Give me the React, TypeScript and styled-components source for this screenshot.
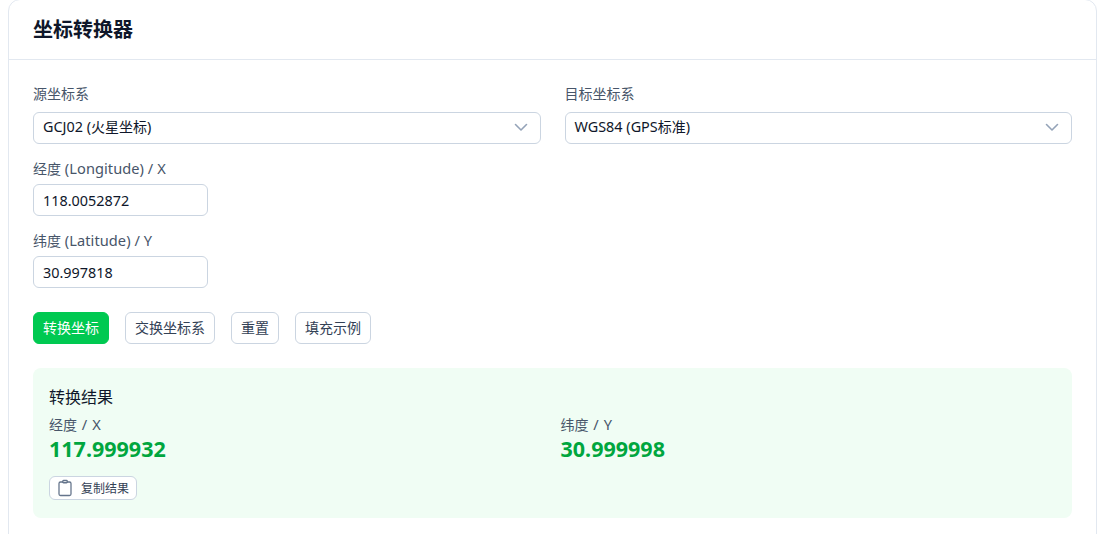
import React from "react";
import styled, { createGlobalStyle } from "styled-components";

const Global = createGlobalStyle`
  html, body { margin: 0; padding: 0; background: #fff; overflow: hidden; height: 534px; }
  body { font-family: "Noto Sans", "Noto Sans CJK SC", sans-serif; color: #0f172a; }
  * { box-sizing: border-box; }
`;

const Page = styled.div`
  padding: 0 2px 0 8px;
`;
const Card = styled.section`
  border: 1px solid #e2e8f0;
  border-radius: 12px;
  background: #fff;
  height: 560px;
  margin-top: -1px;
`;
const Header = styled.header`
  height: 60px;
  border-bottom: 1px solid #e2e8f0;
  padding: 0 24px;
  display: flex;
  align-items: center;
`;
const Title = styled.h1`
  margin: 0;
  font-size: 20px;
  line-height: 28px;
  font-weight: 700;
  color: #0f172a;
`;
const Body = styled.div`
  padding: 24px 24px 0;
  display: flex;
  flex-direction: column;
  gap: 16px;
`;
const Row = styled.div`
  display: grid;
  grid-template-columns: 1fr 1fr;
  gap: 24px;
`;
const Field = styled.div`
  display: flex;
  flex-direction: column;
  gap: 8px;
`;
const Label = styled.label<{ $tall?: boolean }>`
  font-size: 14px;
  line-height: ${(p) => (p.$tall ? "20px" : "16px")};
  height: ${(p) => (p.$tall ? "20px" : "16px")};
  color: #475569;
`;
const Latin = styled.span`
  font-size: 14.4px;
`;
const LabelLatin = styled.span`
  font-size: 14.6px;
  letter-spacing: 0.06px;
`;
const SelectBox = styled.div`
  height: 32px;
  border: 1px solid #cbd5e1;
  border-radius: 6px;
  display: flex;
  align-items: center;
  justify-content: space-between;
  padding: 0 11px 2px 9px;
  font-size: 14px;
  color: #0f172a;
`;
const SelectText = styled.span`
  line-height: 18px;
  height: 18px;
  margin-top: -1px;
`;
const Chevron = () => (
  <svg width="16" height="16" viewBox="0 0 16 16" fill="none" stroke="#94a3b8" strokeWidth="1.6" strokeLinecap="round" strokeLinejoin="round">
    <path d="M2.5 5.5 8 11 13.5 5.5" />
  </svg>
);
const Input = styled.input`
  width: 175px;
  height: 32px;
  border: 1px solid #cbd5e1;
  border-radius: 6px;
  padding: 0 9px;
  font: inherit;
  font-size: 14.4px;
  color: #0f172a;
  outline: none;
`;
const Buttons = styled.div`
  display: flex;
  gap: 16px;
  margin-top: 8px;
`;
const Btn = styled.button<{ $primary?: boolean }>`
  height: 32px;
  padding: 0 9px 2px;
  border-radius: 6px;
  font: inherit;
  font-size: 14px;
  border: 1px solid ${(p) => (p.$primary ? "#00c951" : "#cbd5e1")};
  background: ${(p) => (p.$primary ? "#00c951" : "#fff")};
  color: ${(p) => (p.$primary ? "#fff" : "#334155")};
`;
const Result = styled.div`
  margin-top: 8px;
  height: 150px;
  background: #f0fdf4;
  border-radius: 8px;
  padding: 16px;
`;
const ResultTitle = styled.h2`
  margin: 0 0 5px;
  font-size: 16px;
  line-height: 26px;
  font-weight: 400;
  color: #0f172a;
`;
const Cols = styled.div`
  display: grid;
  grid-template-columns: 1fr 1fr;
  gap: 16px;
`;
const ValLabel = styled.div`
  font-size: 14px;
  line-height: 18px;
  height: 20px;
  word-spacing: 1px;
  color: #475569;
`;
const Value = styled.div`
  font-size: 21.5px;
  line-height: 28px;
  height: 28px;
  font-weight: 700;
  color: #00a63e;
`;
const CopyBtn = styled.button`
  margin-top: 13px;
  height: 24px;
  width: 88px;
  padding: 0 0 0 6px;
  display: flex;
  align-items: center;
  gap: 7px;
  background: #fff;
  border: 1px solid #cbd5e1;
  border-radius: 6px;
  font: inherit;
  font-size: 12px;
  color: #334155;
`;
const Clipboard = () => (
  <svg width="18" height="18" viewBox="0 0 24 24" fill="none" stroke="#64748b" strokeWidth="1.7" strokeLinecap="round" strokeLinejoin="round">
    <rect x="9" y="2" width="6" height="3" rx="1" />
    <path d="M15 4h3a2 2 0 0 1 2 2v14a2 2 0 0 1-2 2H6a2 2 0 0 1-2-2V6a2 2 0 0 1 2-2h3" />
  </svg>
);

export default function App() {
  return (
    <Page>
      <Global />
      <Card>
        <Header>
          <Title>坐标转换器</Title>
        </Header>
        <Body>
          <Row>
            <Field>
              <Label $tall>源坐标系</Label>
              <SelectBox><SelectText><Latin>GCJ02 (</Latin>火星坐标<Latin>)</Latin></SelectText><Chevron /></SelectBox>
            </Field>
            <Field>
              <Label $tall>目标坐标系</Label>
              <SelectBox><SelectText><Latin>WGS84 (GPS</Latin>标准<Latin>)</Latin></SelectText><Chevron /></SelectBox>
            </Field>
          </Row>
          <Field>
            <Label>经度<LabelLatin> (Longitude) / X</LabelLatin></Label>
            <Input defaultValue="118.0052872" />
          </Field>
          <Field>
            <Label>纬度<LabelLatin> (Latitude) / Y</LabelLatin></Label>
            <Input defaultValue="30.997818" />
          </Field>
          <Buttons>
            <Btn $primary>转换坐标</Btn>
            <Btn>交换坐标系</Btn>
            <Btn>重置</Btn>
            <Btn>填充示例</Btn>
          </Buttons>
          <Result>
            <ResultTitle>转换结果</ResultTitle>
            <Cols>
              <div>
                <ValLabel>经度<LabelLatin> / X</LabelLatin></ValLabel>
                <Value>117.999932</Value>
              </div>
              <div>
                <ValLabel>纬度<LabelLatin> / Y</LabelLatin></ValLabel>
                <Value>30.999998</Value>
              </div>
            </Cols>
            <CopyBtn><Clipboard />复制结果</CopyBtn>
          </Result>
        </Body>
      </Card>
    </Page>
  );
}
